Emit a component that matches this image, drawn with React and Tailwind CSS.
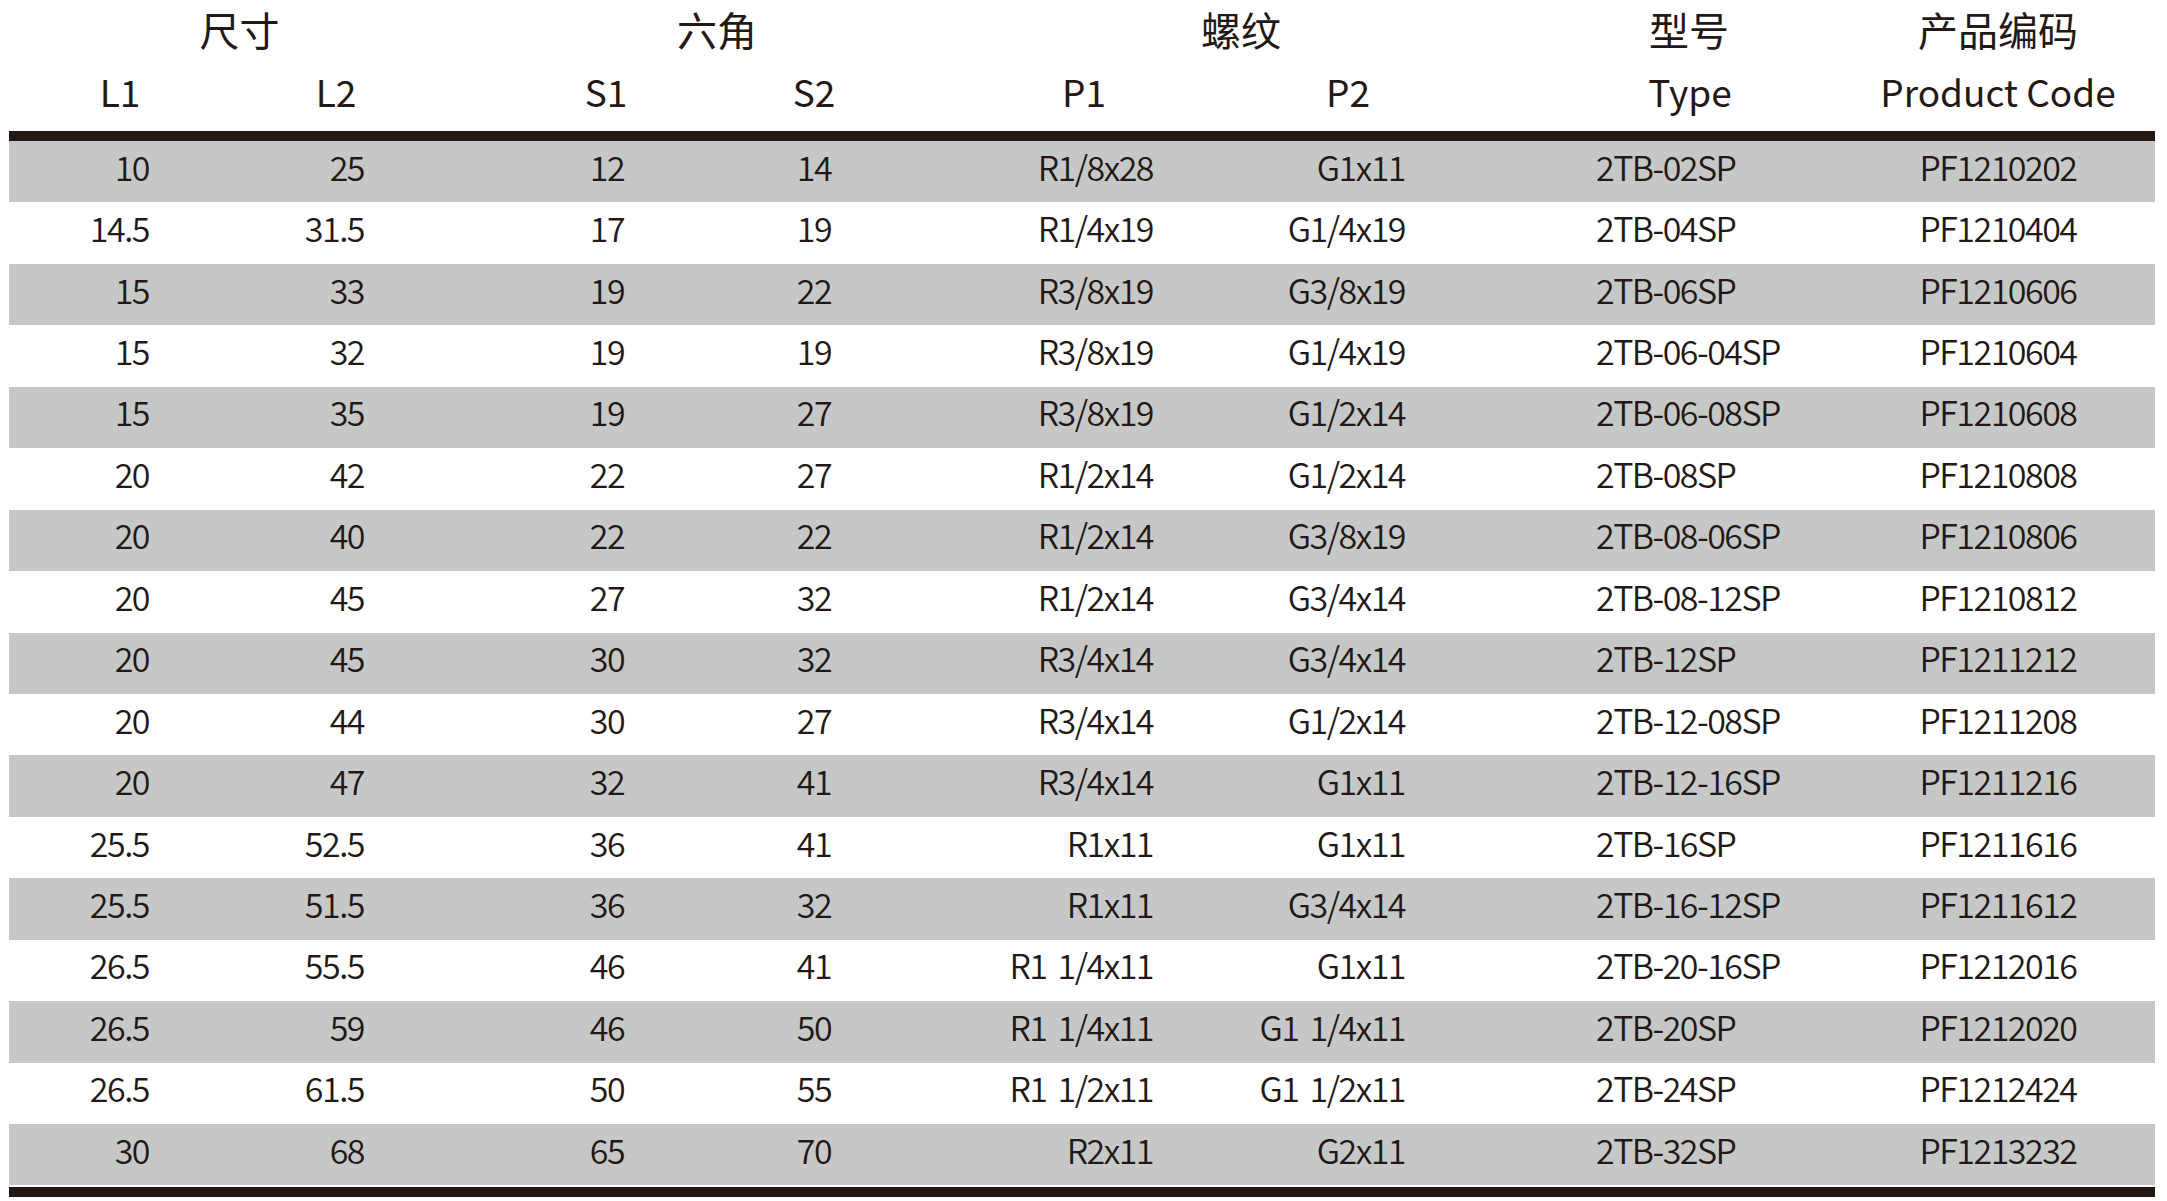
const FONT = { fontFamily: '"Noto Sans CJK SC", "Noto Sans", sans-serif' };

const rows = [
  ["10", "25", "12", "14", "R1/8x28", "G1x11", "2TB-02SP", "PF1210202"],
  ["14.5", "31.5", "17", "19", "R1/4x19", "G1/4x19", "2TB-04SP", "PF1210404"],
  ["15", "33", "19", "22", "R3/8x19", "G3/8x19", "2TB-06SP", "PF1210606"],
  ["15", "32", "19", "19", "R3/8x19", "G1/4x19", "2TB-06-04SP", "PF1210604"],
  ["15", "35", "19", "27", "R3/8x19", "G1/2x14", "2TB-06-08SP", "PF1210608"],
  ["20", "42", "22", "27", "R1/2x14", "G1/2x14", "2TB-08SP", "PF1210808"],
  ["20", "40", "22", "22", "R1/2x14", "G3/8x19", "2TB-08-06SP", "PF1210806"],
  ["20", "45", "27", "32", "R1/2x14", "G3/4x14", "2TB-08-12SP", "PF1210812"],
  ["20", "45", "30", "32", "R3/4x14", "G3/4x14", "2TB-12SP", "PF1211212"],
  ["20", "44", "30", "27", "R3/4x14", "G1/2x14", "2TB-12-08SP", "PF1211208"],
  ["20", "47", "32", "41", "R3/4x14", "G1x11", "2TB-12-16SP", "PF1211216"],
  ["25.5", "52.5", "36", "41", "R1x11", "G1x11", "2TB-16SP", "PF1211616"],
  ["25.5", "51.5", "36", "32", "R1x11", "G3/4x14", "2TB-16-12SP", "PF1211612"],
  ["26.5", "55.5", "46", "41", "R1 1/4x11", "G1x11", "2TB-20-16SP", "PF1212016"],
  ["26.5", "59", "46", "50", "R1 1/4x11", "G1 1/4x11", "2TB-20SP", "PF1212020"],
  ["26.5", "61.5", "50", "55", "R1 1/2x11", "G1 1/2x11", "2TB-24SP", "PF1212424"],
  ["30", "68", "65", "70", "R2x11", "G2x11", "2TB-32SP", "PF1213232"],
];

// per-column placement of the body values
const cellClass = [
  "justify-end pr-[81px]",
  "justify-end pr-[106px]",
  "justify-center pl-[34px]",
  "justify-center pr-[2px]",
  "justify-end pr-[62px]",
  "justify-end pr-[75px]",
  "justify-start pl-[116px]",
  "justify-center pr-[9px]",
];

const subHeads = [
  ["L1", "pl-[1px]"],
  ["L2", "pr-[28px]"],
  ["S1", "pl-[32px]"],
  ["S2", "pr-[2px]"],
  ["P1", "pl-[33px]"],
  ["P2", "pl-[1px]"],
  ["Type", "pl-[50px]"],
  ["Product Code", "pr-[9px]"],
];

const GRID = "grid grid-cols-[221px_240px_240px_210px_295px_265px_370px_305px]";

export default function App() {
  return (
    <div className="min-h-[1201px] bg-white text-[#231815]" style={FONT}>
      <div className="ml-[9px] w-[2146px]">
        {/* group titles */}
        <div className={`${GRID} h-[58px] items-center text-[40px] leading-none`}>
          <div className="col-span-2 flex justify-center">尺寸</div>
          <div className="col-span-2 flex justify-center pl-[44px]">六角</div>
          <div className="col-span-2 flex justify-center pl-[82px]">螺纹</div>
          <div className="flex justify-center pl-[48px]">型号</div>
          <div className="flex justify-center pr-[9px]">产品编码</div>
        </div>

        {/* column titles */}
        <div className={`${GRID} h-[66px] items-center text-[37px] leading-none`}>
          {subHeads.map(([label, pad]) => (
            <div key={label} className={`flex justify-center ${pad}`}>
              {label}
            </div>
          ))}
        </div>

        <div className="mt-[7px] h-[10px] bg-[#231815]" />

        {rows.map((row, i) => (
          <div
            key={i}
            className={`${GRID} h-[61.45px] items-center pb-[10px] text-[34px] font-[350] leading-none tracking-[-1.5px] [word-spacing:5px] ${
              i % 2 === 0 ? "bg-[#c6c8c7]" : "bg-white"
            }`}
          >
            {row.map((val, j) => (
              <div key={j} className={`flex whitespace-pre ${cellClass[j]}`}>
                {val}
              </div>
            ))}
          </div>
        ))}

        <div className="mt-[2px] h-[10px] bg-[#231815]" />
      </div>
    </div>
  );
}
